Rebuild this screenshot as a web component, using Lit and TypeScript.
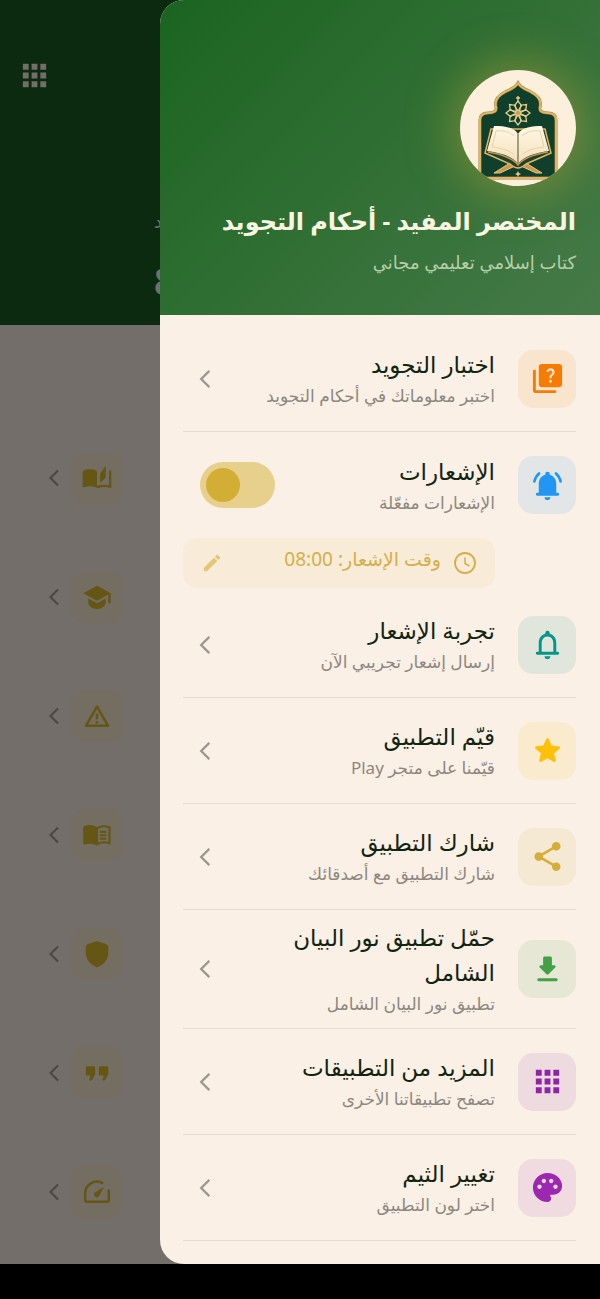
import { LitElement, html, css, svg } from 'lit';
import { customElement, property, state } from 'lit/decorators.js';

const icons = {
  quiz: svg`<path d="M4 6H3a1 1 0 0 0-1 1v13c0 1.1.9 2 2 2h13a1 1 0 0 0 0-2H4V6zM20 2H8c-1.1 0-2 .9-2 2v12c0 1.1.9 2 2 2h12c1.1 0 2-.9 2-2V4c0-1.1-.9-2-2-2zm-5.99 13c-.59 0-1.05-.47-1.05-1.05 0-.59.47-1.04 1.05-1.04.59 0 1.04.45 1.04 1.04-.01.58-.45 1.05-1.04 1.05zm2.5-6.17c-.63.93-1.23 1.21-1.56 1.81-.13.24-.18.4-.18 1.18h-1.52c0-.41-.06-1.08.26-1.65.41-.73 1.18-1.16 1.63-1.8.48-.68.21-1.94-1.14-1.94-.88 0-1.32.67-1.5 1.23l-1.37-.57C11.51 5.96 12.52 5 13.99 5c1.23 0 2.08.56 2.51 1.26.37.61.58 1.73.01 2.57z"/>`,
  bellActive: svg`<path d="M18 17v-6c0-3.07-1.64-5.64-4.5-6.32V4a1.5 1.5 0 0 0-3 0v.68C7.63 5.36 6 7.92 6 11v6H5a1 1 0 0 0 0 2h14a1 1 0 0 0 0-2zm-6 5c1.1 0 2-.9 2-2h-4a2 2 0 0 0 2 2z"/><path d="M3 9.2a10 10 0 0 1 3.2-5.5M21 9.2a10 10 0 0 0-3.2-5.5" fill="none" stroke="currentColor" stroke-width="1.8" stroke-linecap="round"/>`,
  bell: svg`<path d="M12 22c1.1 0 2-.9 2-2h-4a2 2 0 0 0 2 2zm7-5h-1v-6c0-3.07-1.63-5.64-4.5-6.32V4a1.5 1.5 0 0 0-3 0v.68C7.64 5.36 6 7.92 6 11v6H5a1 1 0 0 0 0 2h14a1 1 0 0 0 0-2zm-3 0H8v-6c0-2.48 1.51-4.5 4-4.5s4 2.02 4 4.5v6z"/>`,
  star: svg`<path d="M12 17.27l4.15 2.51c.76.46 1.69-.22 1.49-1.08l-1.1-4.72 3.67-3.18c.67-.58.31-1.68-.57-1.75l-4.83-.41-1.89-4.46c-.34-.81-1.5-.81-1.84 0L9.19 8.63l-4.83.41c-.88.07-1.24 1.17-.57 1.75l3.67 3.18-1.1 4.72c-.2.86.73 1.54 1.49 1.08l4.15-2.5z"/>`,
  share: svg`<path d="M18 16.08c-.76 0-1.44.3-1.96.77L8.91 12.7c.05-.23.09-.46.09-.7s-.04-.47-.09-.7l7.05-4.11c.54.5 1.25.81 2.04.81 1.66 0 3-1.34 3-3s-1.34-3-3-3-3 1.34-3 3c0 .24.04.47.09.7L8.04 9.81C7.5 9.31 6.79 9 6 9c-1.66 0-3 1.34-3 3s1.34 3 3 3c.79 0 1.5-.31 2.04-.81l7.12 4.16c-.05.21-.08.43-.08.65 0 1.61 1.31 2.92 2.92 2.92s2.92-1.31 2.92-2.92-1.31-2.92-2.92-2.92z"/>`,
  download: svg`<path d="M16.59 9H15V4c0-.55-.45-1-1-1h-4c-.55 0-1 .45-1 1v5H7.41c-.89 0-1.34 1.08-.71 1.71l4.59 4.59c.39.39 1.02.39 1.41 0l4.59-4.59c.63-.63.19-1.71-.7-1.71zM5 19c0 .55.45 1 1 1h12c.55 0 1-.45 1-1s-.45-1-1-1H6c-.55 0-1 .45-1 1z"/>`,
  apps: svg`<path d="M4 8h4V4H4v4zm6 12h4v-4h-4v4zm-6 0h4v-4H4v4zm0-6h4v-4H4v4zm6 0h4v-4h-4v4zm6-10v4h4V4h-4zm-6 4h4V4h-4v4zm6 6h4v-4h-4v4zm0 6h4v-4h-4v4z"/>`,
  palette: svg`<path d="M12 2C6.49 2 2 6.49 2 12s4.49 10 10 10c1.38 0 2.5-1.12 2.5-2.5 0-.61-.23-1.2-.64-1.67-.08-.1-.13-.21-.13-.33 0-.28.22-.5.5-.5H16c3.31 0 6-2.69 6-6 0-4.96-4.49-9-10-9zm5.5 11c-.83 0-1.5-.67-1.5-1.5s.67-1.5 1.5-1.5 1.5.67 1.5 1.5-.67 1.5-1.5 1.5zm-3-4c-.83 0-1.5-.67-1.5-1.5S13.67 6 14.5 6s1.5.67 1.5 1.5S15.33 9 14.5 9zM5 11.5c0-.83.67-1.5 1.5-1.5s1.5.67 1.5 1.5S7.33 13 6.5 13 5 12.33 5 11.5zm6-4c0 .83-.67 1.5-1.5 1.5S8 8.33 8 7.5 8.67 6 9.5 6s1.5.67 1.5 1.5z"/>`,
  chevron: svg`<path d="M16 4.5 8.5 12l7.5 7.5" fill="none" stroke="currentColor" stroke-width="2.1"/>`,
  clock: svg`<g fill="none" stroke="currentColor" stroke-width="1.8"><circle cx="12" cy="12" r="10"/><path d="M12 6.5v6l4.5 2.6" stroke-width="1.5"/></g>`,
  pencil: svg`<path d="M3 17.5V20c0 .6.4 1 1 1h2.5L17.8 9.9l-3.7-3.7L3 17.5zM20.7 7a1 1 0 0 0 0-1.4l-2.3-2.3a1 1 0 0 0-1.4 0l-1.8 1.8 3.7 3.7L20.7 7z"/>`,
  stories: svg`<path d="M.5 7.5C.5 6 3 5 6 5s5 .7 6 1.800v13c-1.400-.8-3.500-1.300-5.500-1.300-1.600 0-3 .3-4.700.9-.7.200-1.300 0-1.300-.7zM14.500 8.500 19 2v9.500l-4.500 4.500z"/><path d="M22.500 6v13c-3.400-1.100-7-.7-10.500.3" fill="none" stroke="currentColor" stroke-width="1.800"/>`,
  school: svg`<path d="M5 13.18v3c0 3 3 5.32 7 5.32s7-2.32 7-5.32v-3L12 17l-7-3.820zM12 3 1 9l11 6 9-4.910V17h2V9L12 3z"/>`,
  warning: svg`<path d="M12 4.5 3.2 19.7h17.6z" fill="none" stroke="currentColor" stroke-width="2" stroke-linejoin="round"/><path d="M11 10h2v4.5h-2zM11 16h2v2h-2z"/>`,
  reader: svg`<path d="M12 6c-1.500-1.300-3.400-2-5.500-2C3.500 4 1 4.800 1 6v13c0 .5.500.800 1 .6 3-1 7-.800 10 .9z"/><path d="M12 6.500c2.600-1.800 7-2 10-.7V18.500c-3-.9-7-.8-10 .8zM14.300 9.500h5.200M14.300 12.200h5.200M14.300 15h5.200" fill="none" stroke="currentColor" stroke-width="1.700"/>`,
  shield: svg`<path d="M12 1.500 4.600 4.200C3.700 4.600 3 5.300 3 6.300V11c0 5.500 3.800 9.800 9 11.500 5.200-1.700 9-6 9-11.500V6.300c0-1-.7-1.700-1.600-2.100z"/>`,
  quote: svg`<path d="M4 6.500h5.500q1 0 1 1V13l-2.300 4.200q-.4.800-1.300.8-1.600 0-.9-1.500L7 14H4q-1 0-1-1V7.500q0-1 1-1zM14.500 6.500H20q1 0 1 1V13l-2.300 4.200q-.4.800-1.300.8-1.600 0-.9-1.500l1-2.500h-3q-1 0-1-1V7.500q0-1 1-1z"/>`,
  gauge: svg`<path d="M17 5.200A9.500 9.500 0 0 0 2.500 13v5.200c0 .9.700 1.600 1.600 1.600h15.800c.9 0 1.600-.7 1.600-1.600V13c0-1-.1-2-.5-3" fill="none" stroke="currentColor" stroke-width="2"/><path d="M17.500 8l-3.800 7.200a2.200 2.200 0 1 1-3-3z"/>`,
};

type IconName = keyof typeof icons;

interface MenuItem {
  title: string;
  sub: string;
  icon: IconName;
  color: string;
}

const quizItem: MenuItem = { title: 'اختبار التجويد', sub: 'اختبر معلوماتك في أحكام التجويد', icon: 'quiz', color: '#f57c00' };

const items: MenuItem[] = [
  { title: 'تجربة الإشعار', sub: 'إرسال إشعار تجريبي الآن', icon: 'bell', color: '#009688' },
  { title: 'قيّم التطبيق', sub: 'قيّمنا على متجر Play', icon: 'star', color: '#ffc107' },
  { title: 'شارك التطبيق', sub: 'شارك التطبيق مع أصدقائك', icon: 'share', color: '#d4af37' },
  { title: 'حمّل تطبيق نور البيان الشامل', sub: 'تطبيق نور البيان الشامل', icon: 'download', color: '#43a047' },
  { title: 'المزيد من التطبيقات', sub: 'تصفح تطبيقاتنا الأخرى', icon: 'apps', color: '#8e24aa' },
  { title: 'تغيير الثيم', sub: 'اختر لون التطبيق', icon: 'palette', color: '#9c27b0' },
];

const chapters: IconName[] = ['stories', 'school', 'warning', 'reader', 'shield', 'quote', 'gauge'];

@customElement('app-icon')
class AppIcon extends LitElement {
  @property() name: IconName = 'apps';

  static styles = css`
    :host {
      display: block;
      flex: none;
      width: 35px;
      height: 35px;
    }

    svg {
      display: block;
      width: 100%;
      height: 100%;
      fill: currentColor;
    }
  `;

  render() {
    return html`<svg viewBox="0 0 24 24" aria-hidden="true">${icons[this.name]}</svg>`;
  }
}

@customElement('app-logo')
class AppLogo extends LitElement {
  static styles = css`
    :host {
      display: block;
      width: 116px;
      height: 116px;
      border-radius: 50%;
      box-shadow: 0 0 46px 10px rgba(212, 175, 55, 0.36);
    }

    svg {
      display: block;
      width: 100%;
      height: 100%;
    }
  `;

  render() {
    const petals = [0, 45, 90, 135, 180, 225, 270, 315];
    const arch = 'M20 108V50c0-5 3-7 8-7 6 0 9-2 8-6-2-8 3-12 9-15 6-3 10-4 13-9 3 5 7 6 13 9 6 3 11 7 9 15-1 4 2 6 8 6 5 0 8 2 8 7v58z';
    return html`
      <svg viewBox="0 0 116 116" role="img" aria-label="المختصر المفيد">
        <defs>
          <clipPath id="disc"><circle cx="58" cy="58" r="58"/></clipPath>
          <linearGradient id="page" x1="0" y1="0" x2="0" y2="1">
            <stop offset="0" stop-color="#fff8e6"/>
            <stop offset="1" stop-color="#f3e0bb"/>
          </linearGradient>
        </defs>
        <g clip-path="url(#disc)">
          <rect width="116" height="116" fill="#fcefdc"/>
          <path d=${arch} fill="#10402b" stroke="#a07c3a" stroke-width="3"/>
          <path d=${arch} fill="none" stroke="#dfb566" stroke-width="2"/>
          <path d="M20 102q2 5 8 5h60q6 0 8-5v7H20z" fill="#dfb566"/>
          <g fill="none" stroke="#e6cf8c" stroke-width="1.3">
            ${petals.map((a) => svg`<path d="M58 41l-3.500-5.500 3.500-4.500 3.500 4.500z" transform="rotate(${a} 58 43)"/>`)}
            <path d="M58 31v-5M56 28h4"/>
          </g>
          <circle cx="58" cy="43" r="2.2" fill="#d99a55"/>
          <path d="M50 93 34 103l6 0 15-7zM66 93l16 10h-6L61 96z" fill="#c99a4c" stroke="#e6c682"/>
          <path d="M58 101l1 2 2 1-2 1-1 2-1-2-2-1 2-1z" fill="#e6c682"/>
          <path d="M31 59l-6 24 25 11q5 4 8 4t8-4l25-11-6-24z" fill="#23412a" stroke="#dfb566" stroke-width="1.5"/>
          <path d="M34 56c10 0 20 1 24 8 4-7 14-8 24-8l7 25c-14 2-25 5-31 13-6-8-17-11-31-13z" fill="url(#page)"/>
          <path d="M28 82c12 2 24 5 30 13 6-8 18-11 30-13" fill="none" stroke="#bd9656" stroke-width="1.5"/>
          <path d="M36 61c8-1 14 1 18 5M32 77c9 1 16 3 21 7M36 61l-4 16M80 61c-8-1-14 1-18 5M84 77c-9 1-16 3-21 7M80 61l4 16" fill="none" stroke="#ecd0a0"/>
          <path d="M58 64v29" stroke="#6b6a45" stroke-width="1.2"/>
        </g>
      </svg>
    `;
  }
}

@customElement('app-root')
class AppRoot extends LitElement {
  @state() notify = true;

  static styles = css`
    :host {
      display: flex;
      flex-direction: column;
      min-height: 100vh;
      direction: rtl;
      background: #000;
      color: #12240f;
      font-family: 'Noto Sans', 'DejaVu Sans', sans-serif;
    }

    button {
      border: 0;
      padding: 0;
      background: none;
      color: inherit;
      font: inherit;
      text-align: start;
      cursor: pointer;
    }

    .screen {
      display: grid;
      flex: 1;
      background: #736e6a;
    }

    .home,
    .drawer {
      grid-area: 1 / 1;
    }

    /* page under the scrim, colours already darkened */
    .hero {
      display: flex;
      flex-direction: column;
      box-sizing: border-box;
      height: 325px;
      padding: 58px 17px 0;
      background: #0b2a0f;
      color: #736e6a;
      direction: ltr;
    }

    .hero-text {
      margin: 0;
      padding: 112px 0 0 137px;
      font-size: 18px;
      line-height: 32px;
    }

    .hero-count {
      margin: 0;
      padding: 24px 0 0 137px;
      font-size: 38px;
      font-weight: bold;
      line-height: 38px;
    }

    .chapters {
      display: flex;
      flex-direction: column;
      padding: 93px 0 12px 42px;
    }

    .chapter {
      display: flex;
      align-items: center;
      justify-content: flex-end;
      gap: 5px;
      height: 119px;
      color: #4a4744;
    }

    .chapter-icon {
      display: grid;
      place-items: center;
      width: 52px;
      height: 52px;
      border-radius: 14px;
      background: #746d62;
      color: #655614;
    }

    .chapter-icon app-icon {
      width: 30px;
      height: 30px;
    }

    .chapter-arrow {
      width: 24px;
      height: 24px;
    }

    .drawer {
      width: calc(100% - 160px);
      overflow: hidden;
      border-start-end-radius: 24px;
      border-end-end-radius: 24px;
      background: #faf0e6;
    }

    .drawer-head {
      display: flex;
      flex-direction: column;
      box-sizing: border-box;
      height: 315px;
      padding: 70px 24px 0;
      background: linear-gradient(135deg, #1b6420, #467a48);
    }

    .name {
      margin: 16px 0 0;
      color: #faf5e0;
      font-size: 24px;
      line-height: 38px;
    }

    .tagline {
      margin: 8px 0 0;
      color: #b5cfa8;
      font-size: 18px;
      line-height: 28px;
    }

    .menu {
      display: flex;
      flex-direction: column;
      padding: 11px 24px 23px 23px;
    }

    .row {
      display: flex;
      align-items: center;
      gap: 23px;
      box-sizing: border-box;
      width: 100%;
      min-height: 106px;
      padding: 10px 0 10px 9px;
    }

    .line {
      border-bottom: 1px solid #e6dcd3;
    }

    .badge {
      display: grid;
      flex: none;
      place-items: center;
      width: 58px;
      height: 58px;
      border-radius: 15px;
    }

    .texts {
      display: flex;
      flex: 1;
      flex-direction: column;
    }

    .title {
      font-size: 23px;
      line-height: 35px;
    }

    .sub {
      color: #8d877e;
      font-size: 17px;
      line-height: 28px;
    }

    .arrow {
      width: 26px;
      height: 26px;
      color: #9c968e;
    }

    .switch {
      display: flex;
      flex: none;
      align-items: center;
      box-sizing: border-box;
      width: 75px;
      height: 46px;
      margin: 0;
      margin-inline-end: 8px;
      padding: 6px;
      border-radius: 23px;
      appearance: none;
      background: #ddd5cb;
      cursor: pointer;
    }

    .switch::before {
      width: 34px;
      height: 34px;
      border-radius: 50%;
      background: #948d84;
      content: '';
    }

    .switch:checked {
      justify-content: flex-end;
      background: #e7cf8c;
    }

    .switch:checked::before {
      background: #d2ae35;
    }

    .time {
      display: flex;
      align-items: center;
      gap: 12px;
      height: 50px;
      margin: 0 81px 4px 0;
      padding: 0 18px;
      border-radius: 14px;
      background: #f8ebd8;
      color: #d4af47;
      font-size: 19px;
    }

    .time app-icon {
      width: 24px;
      height: 24px;
    }

    .time-text {
      flex: 1;
      padding-bottom: 8px;
      line-height: 28px;
    }

    .time .edit {
      width: 22px;
      height: 22px;
      color: #e2c873;
    }

    .system-bar {
      height: 35px;
    }
  `;

  renderBadge(icon: IconName, color: string) {
    return html`
      <span class="badge" style="color: ${color}; background: ${color}1a">
        <app-icon name=${icon}></app-icon>
      </span>
    `;
  }

  renderItem(item: MenuItem) {
    return html`
      <button class="row line">
        ${this.renderBadge(item.icon, item.color)}
        <span class="texts">
          <span class="title">${item.title}</span>
          <span class="sub">${item.sub}</span>
        </span>
        <app-icon class="arrow" name="chevron"></app-icon>
      </button>
    `;
  }

  render() {
    return html`
      <div class="screen">
        <div class="home" inert>
          <div class="hero">
            <app-icon name="apps"></app-icon>
            <p class="hero-text">د</p>
            <p class="hero-count">8</p>
          </div>
          <div class="chapters">
            ${chapters.map((name) => html`
              <div class="chapter">
                <span class="chapter-icon"><app-icon name=${name}></app-icon></span>
                <app-icon class="chapter-arrow" name="chevron"></app-icon>
              </div>
            `)}
          </div>
        </div>
        <nav class="drawer">
          <header class="drawer-head">
            <app-logo></app-logo>
            <h1 class="name">المختصر المفيد - أحكام التجويد</h1>
            <p class="tagline">كتاب إسلامي تعليمي مجاني</p>
          </header>
          <div class="menu">
            ${this.renderItem(quizItem)}
            <label class="row">
              ${this.renderBadge('bellActive', '#2196f3')}
              <span class="texts">
                <span class="title">الإشعارات</span>
                <span class="sub">الإشعارات مفعّلة</span>
              </span>
              <input
                class="switch"
                type="checkbox"
                role="switch"
                .checked=${this.notify}
                @change=${(e: Event) => { this.notify = (e.target as HTMLInputElement).checked; }}
              >
            </label>
            <button class="time">
              <app-icon name="clock"></app-icon>
              <span class="time-text">وقت الإشعار: 08:00</span>
              <app-icon class="edit" name="pencil"></app-icon>
            </button>
            ${items.map((item) => this.renderItem(item))}
          </div>
        </nav>
      </div>
      <div class="system-bar"></div>
    `;
  }
}
